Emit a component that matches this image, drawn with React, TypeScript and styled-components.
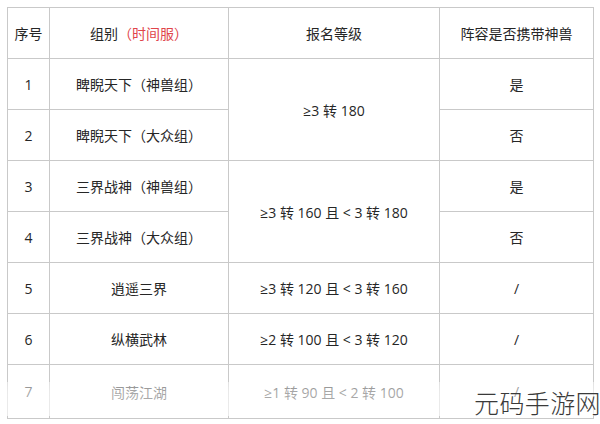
import styled, { createGlobalStyle } from "styled-components";

const GlobalStyle = createGlobalStyle`
  html, body {
    margin: 0;
    padding: 0;
    background: #ffffff;
    overflow: hidden;
  }
  body {
    font-family: "Open Sans", "Liberation Sans", "Noto Sans CJK SC", sans-serif;
  }
`;

type Row = {
  no: string;
  group: string;
  level?: string;
  levelSpan?: number;
  beast: string;
};

const rows: Row[] = [
  { no: "1", group: "睥睨天下（神兽组）", level: "≥3 转 180", levelSpan: 2, beast: "是" },
  { no: "2", group: "睥睨天下（大众组）", beast: "否" },
  { no: "3", group: "三界战神（神兽组）", level: "≥3 转 160 且 < 3 转 180", levelSpan: 2, beast: "是" },
  { no: "4", group: "三界战神（大众组）", beast: "否" },
  { no: "5", group: "逍遥三界", level: "≥3 转 120 且 < 3 转 160", beast: "/" },
  { no: "6", group: "纵横武林", level: "≥2 转 100 且 < 3 转 120", beast: "/" },
  { no: "7", group: "闯荡江湖", level: "≥1 转 90 且 < 2 转 100", beast: "/" },
];

const Page = styled.div`
  position: relative;
  width: 600px;
  height: 424px;
  padding: 7px 0 0 7px;
  box-sizing: border-box;
`;

const Table = styled.table`
  border-collapse: collapse;
  table-layout: fixed;
  width: 587px;
  color: #262626;
  font-size: 14px;
`;

const Cell = styled.td<{ $w?: number }>`
  border: 1px solid #c9c9c9;
  text-align: center;
  vertical-align: middle;
  padding: 0;
  height: 50px;
  ${(p) => (p.$w ? `width: ${p.$w}px;` : "")}
`;

const HeadCell = styled(Cell).attrs({ as: "th" })`
  font-weight: normal;
`;

const BodyRow = styled.tr<{ $last?: boolean }>`
  ${(p) => (p.$last ? "td { height: 53px; }" : "")}
`;

const Red = styled.span`
  color: #e0454a;
`;

const Fade = styled.div`
  position: absolute;
  left: 0;
  right: 0;
  top: 382px;
  height: 34px;
  background: linear-gradient(
    to bottom,
    rgba(255, 255, 255, 0.45) 0%,
    rgba(255, 255, 255, 0.6) 30%,
    rgba(255, 255, 255, 0.62) 100%
  );
  pointer-events: none;
`;

const Watermark = styled.div`
  position: absolute;
  left: 474px;
  top: 389px;
  font-family: "Noto Sans CJK SC", sans-serif;
  font-size: 25px;
  line-height: 1.1;
  font-weight: 300;
  letter-spacing: 0.4px;
  color: #3a3a3a;
  white-space: nowrap;
`;

export default function App() {
  return (
    <>
      <GlobalStyle />
      <Page>
        <Table>
          <thead>
            <tr>
              <HeadCell $w={41}>序号</HeadCell>
              <HeadCell $w={178}>
                组别<Red>（时间服）</Red>
              </HeadCell>
              <HeadCell $w={210}>报名等级</HeadCell>
              <HeadCell>阵容是否携带神兽</HeadCell>
            </tr>
          </thead>
          <tbody>
            {rows.map((r, i) => (
              <BodyRow key={r.no} $last={i === rows.length - 1}>
                <Cell>{r.no}</Cell>
                <Cell>{r.group}</Cell>
                {r.level && <Cell rowSpan={r.levelSpan ?? 1}>{r.level}</Cell>}
                <Cell>{r.beast}</Cell>
              </BodyRow>
            ))}
          </tbody>
        </Table>
        <Fade />
        <Watermark>元码手游网</Watermark>
      </Page>
    </>
  );
}
